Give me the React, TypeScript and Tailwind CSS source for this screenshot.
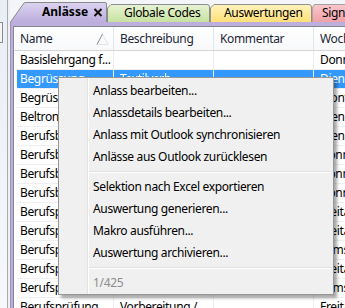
import React from "react";

const rows = [
  { name: "Basislehrgang f...", desc: "", day: "Donnerstag" },
  { name: "Begrüssung", desc: "Textilverb...", day: "Dienstag", selected: true },
  { name: "Begrüssung", desc: "", day: "Montag" },
  { name: "Beltron", desc: "", day: "Dienstag" },
  { name: "Berufsbildner", desc: "", day: "Dienstag" },
  { name: "Berufsbildner", desc: "", day: "Donnerstag" },
  { name: "Berufsbildner", desc: "", day: "Donnerstag" },
  { name: "Berufsbildner", desc: "", day: "Donnerstag" },
  { name: "Berufsprüfung", desc: "", day: "Freitag" },
  { name: "Berufsprüfung", desc: "", day: "Freitag" },
  { name: "Berufsprüfung", desc: "", day: "Samstag" },
  { name: "Berufsprüfung", desc: "", day: "Freitag" },
  { name: "Berufsprüfung", desc: "", day: "Samstag" },
  { name: "Berufsprüfung", desc: "Vorbereitung /", day: "Freitag" },
];

const menuGroups = [
  [
    "Anlass bearbeiten...",
    "Anlassdetails bearbeiten...",
    "Anlass mit Outlook synchronisieren",
    "Anlässe aus Outlook zurücklesen",
  ],
  [
    "Selektion nach Excel exportieren",
    "Auswertung generieren...",
    "Makro ausführen...",
    "Auswertung archivieren...",
  ],
];

function TabShape({ from, to, active }: { from: string; to: string; active?: boolean }) {
  const id = `g${from.slice(1)}`;
  return (
    <svg className="absolute inset-0 h-full w-full" preserveAspectRatio="none" viewBox={active ? "0 0 97 20" : "0 0 103 18"}>
      <defs>
        <linearGradient id={id} x1="0" y1="0" x2="0" y2="1">
          <stop offset="0" stopColor={from} />
          <stop offset="1" stopColor={to} />
        </linearGradient>
      </defs>
      {active ? (
        <path d="M0.5 20 L14 1 Q14.8 0.5 16 0.5 L95 0.5 Q96.5 0.5 96.5 2 L96.5 20" fill={`url(#${id})`} stroke="#8a8a8a" strokeWidth="1" />
      ) : (
        <path d="M0.5 18 L0.5 4 L4 0.5 L100 0.5 Q102.5 0.5 102.5 3 L102.5 18" fill={`url(#${id})`} stroke="#8e8e8e" strokeWidth="1" />
      )}
    </svg>
  );
}

function Tab({ label, from, to, w, pl }: { label: string; from: string; to: string; w: string; pl: string }) {
  return (
    <div className={`relative h-[18px] shrink-0 ${w}`}>
      <TabShape from={from} to={to} />
      <span className={`relative block whitespace-nowrap text-[12px] leading-[18px] text-black ${pl}`}>{label}</span>
    </div>
  );
}

export default function App() {
  return (
    <div className="relative flex h-[308px] w-[345px] overflow-hidden bg-[#f3f5f8] font-['Noto_Sans',sans-serif] text-[12px] tracking-[-0.35px] text-black">
      {/* left edge */}
      <div className="w-[7px] shrink-0 bg-gradient-to-b from-[#e9eef4] to-[#f6f8fb]">
        <div className="mt-[22px] h-[21px] w-[3px] border-y border-r border-[#8a8a8a] bg-[#f4f4f4]" />
      </div>
      <div className="w-px shrink-0 bg-[#a7acb3]" />
      <div className="w-[2px] shrink-0 bg-[#f0f0f0]" />

      <div className="flex min-w-0 flex-1 flex-col">
        {/* tab strip */}
        <div className="flex h-[22px] shrink-0 items-end">
          <div className="relative z-10 h-[20px] w-[97px] shrink-0">
            <TabShape from="#dcd3f0" to="#bcaedd" active />
            <div className="relative flex h-full items-center pl-[32px] pr-[4px]">
              <span className="text-[12px] font-bold leading-none tracking-normal">Anlässe</span>
              <svg className="ml-auto" width="10" height="9" viewBox="0 0 10 9">
                <path d="M1.5 1 L8.5 8 M8.5 1 L1.5 8" stroke="#111" strokeWidth="2" />
              </svg>
            </div>
          </div>
          <Tab label="Globale Codes" from="#e7f3d4" to="#c6e29f" w="w-[103px]" pl="pl-[17px]" />
          <Tab label="Auswertungen" from="#fff3bd" to="#ffdf78" w="w-[102px]" pl="pl-[14px]" />
          <Tab label="Signaturen" from="#f9c7cb" to="#f0a0a8" w="w-[60px]" pl="pl-[10px]" />
        </div>

        {/* purple frame with list */}
        <div className="flex flex-1 flex-col border-l border-[#9b92b6] bg-[#bcaedd] pl-[2px] pt-[4px]">
          <div className="flex flex-1 flex-col border-l border-t border-[#828790] bg-white">
            {/* header */}
            <div className="flex h-[24px] shrink-0 border-b border-[#d5d5d5] bg-gradient-to-b from-white to-[#f8f9fb] pl-[3px] text-[#1c2636]">
              <div className="flex w-[97px] shrink-0 items-center border-r border-[#e3e6ea] pl-[3px]">
                <span>Name</span>
                <svg className="ml-auto mr-[4px]" width="13" height="12" viewBox="0 0 13 12">
                  <path d="M1 11.5 L6.5 1 L12 11.5 Z" fill="none" stroke="#e2e4e8" strokeWidth="1" />
                  <path d="M1 11.5 L6.5 1" fill="none" stroke="#8b8f96" strokeWidth="1" />
                </svg>
              </div>
              <div className="flex w-[100px] shrink-0 items-center border-r border-[#e3e6ea] pl-[6px]">Beschreibung</div>
              <div className="flex w-[100px] shrink-0 items-center border-r border-[#e3e6ea] pl-[6px]">Kommentar</div>
              <div className="flex w-[100px] shrink-0 items-center whitespace-nowrap pl-[6px]">Wochentag</div>
            </div>

            {/* rows */}
            {rows.map((r, i) => (
              <div key={i} className="flex h-[19px] shrink-0 pl-[3px]">
                <div className={`flex flex-1 border-b border-[#efefef] ${r.selected ? "bg-[#3399ff] text-white" : ""}`}>
                  <div className="w-[97px] shrink-0 overflow-hidden whitespace-nowrap border-r border-[#ececec] pl-[3px] leading-[18px]">{r.name}</div>
                  <div className={`w-[100px] shrink-0 overflow-hidden whitespace-nowrap border-r border-[#ececec] pl-[6px] leading-[18px] ${r.selected ? "blur-[0.6px]" : ""}`}>{r.desc}</div>
                  <div className="w-[100px] shrink-0 border-r border-[#ececec]" />
                  <div className="w-[100px] shrink-0 overflow-hidden whitespace-nowrap pl-[6px] leading-[18px]">{r.day}</div>
                </div>
              </div>
            ))}
          </div>
        </div>
      </div>

      {/* context menu */}
      <div className="absolute left-[58px] top-[77px] flex h-[218px] w-[276px] border border-[#979797] bg-[#f0f0f0] shadow-[3px_3px_3px_rgba(0,0,0,0.35)]">
        <div className="w-[28px] shrink-0" />
        <div className="w-px shrink-0 bg-[#e2e3e3]" />
        <div className="w-px shrink-0 bg-white" />
        <div className="flex flex-1 flex-col pr-[2px] pt-[2px]">
          {menuGroups.map((g, gi) => (
            <React.Fragment key={gi}>
              {g.map((item) => (
                <div key={item} className="flex h-[22px] shrink-0 items-center whitespace-nowrap pl-[4px]">
                  {item}
                </div>
              ))}
              <div className="flex h-[8px] shrink-0 flex-col justify-center">
                <div className="h-px bg-[#e0e0e0]" />
                <div className="h-px bg-white" />
              </div>
            </React.Fragment>
          ))}
          <div className="flex h-[22px] shrink-0 items-center pl-[4px] text-[#8d8d8d]">1/425</div>
        </div>
      </div>
    </div>
  );
}
